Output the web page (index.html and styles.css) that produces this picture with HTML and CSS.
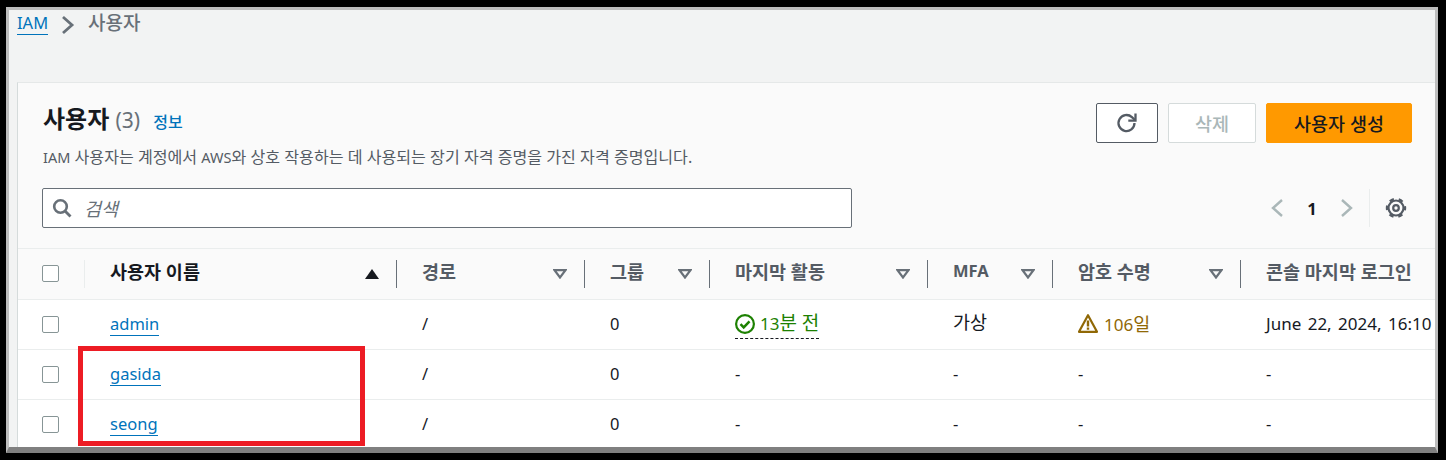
FILE: index.html
```html
<!DOCTYPE html>
<html lang="ko">
<head>
    <meta charset="UTF-8">
    <title>IAM 사용자</title>
    <link rel="stylesheet" href="styles.css">
</head>
<body>
    <div class="page">
        <div class="breadcrumb">
            <a class="crumb-link">IAM</a>
            <svg class="crumb-sep" width="14" height="20" viewBox="0 0 14 20"><path d="M2 2l9 8-9 8" fill="none" stroke="#687078" stroke-width="2.800"/></svg>
            <span class="crumb-current">사용자</span>
        </div>

        <div class="panel">
            <div class="panel-head">
                <div class="title-row">
                    <div class="title-block">
                        <h1>사용자 <span class="count">(3)</span> <a class="info">정보</a></h1>
                        <p class="desc"><span class="lat">IAM</span> 사용자는 계정에서 <span class="lat">AWS</span>와 상호 작용하는 데 사용되는 장기 자격 증명을 가진 자격 증명입니다.</p>
                    </div>
                    <div class="actions">
                        <button class="btn btn-icon">
                            <svg width="22" height="22" viewBox="0 0 22 22"><path d="M18.500 11a8 8 0 1 1-2.600-5.900L19 8" fill="none" stroke="#545b64" stroke-width="2.300"/><path d="M19.500 1.500V8.700h-7.200" fill="none" stroke="#545b64" stroke-width="2.300"/></svg>
                        </button>
                        <button class="btn btn-disabled">삭제</button>
                        <button class="btn btn-primary">사용자 생성</button>
                    </div>
                </div>
                <div class="filter-row">
                    <div class="search">
                        <svg width="20" height="20" viewBox="0 0 20 20"><circle cx="8.500" cy="8.500" r="6.300" fill="none" stroke="#687078" stroke-width="2.600"/><path d="M13 13l5.500 5.500" stroke="#687078" stroke-width="2.800"/></svg>
                        <span class="placeholder">검색</span>
                    </div>
                    <div class="pager">
                        <svg width="16" height="20" viewBox="0 0 16 20"><path d="M13 2L4 10l9 8" fill="none" stroke="#aab7b8" stroke-width="2.400"/></svg>
                        <span class="page-num">1</span>
                        <svg width="16" height="20" viewBox="0 0 16 20"><path d="M3 2l9 8-9 8" fill="none" stroke="#aab7b8" stroke-width="2.400"/></svg>
                        <span class="pager-sep"></span>
                        <svg class="gear" width="22" height="22" viewBox="0 0 22 22"><circle cx="11" cy="11" r="7.500" fill="none" stroke="#545b64" stroke-width="2.200"/><circle cx="11" cy="11" r="9" fill="none" stroke="#545b64" stroke-width="2.400" stroke-dasharray="4.500 4.925" stroke-dashoffset="2.250"/><circle cx="11" cy="11" r="2.800" fill="none" stroke="#545b64" stroke-width="2.200"/></svg>
                    </div>
                </div>
            </div>

            <table class="users">
                <colgroup>
                    <col class="c-check"><col class="c-name"><col class="c-path"><col class="c-group">
                    <col class="c-activity"><col class="c-mfa"><col class="c-pass"><col>
                </colgroup>
                <thead>
                    <tr>
                        <th><span class="cell-head first"><span class="checkbox"></span></span></th>
                        <th class="sorted"><span class="cell-head">사용자 이름 <svg class="sort" width="14" height="10" viewBox="0 0 14 10"><path d="M7 0l7 10H0z" fill="#16191f"/></svg></span></th>
                        <th><span class="cell-head">경로 <svg class="sort" width="14" height="10" viewBox="0 0 14 10"><path d="M1.500 1.200h11L7 8.500z" fill="none" stroke="#687078" stroke-width="2.200"/></svg></span></th>
                        <th><span class="cell-head">그룹 <svg class="sort" width="14" height="10" viewBox="0 0 14 10"><path d="M1.500 1.200h11L7 8.500z" fill="none" stroke="#687078" stroke-width="2.200"/></svg></span></th>
                        <th><span class="cell-head">마지막 활동 <svg class="sort" width="14" height="10" viewBox="0 0 14 10"><path d="M1.500 1.200h11L7 8.500z" fill="none" stroke="#687078" stroke-width="2.200"/></svg></span></th>
                        <th><span class="cell-head"><span class="lat-head">MFA</span> <svg class="sort" width="14" height="10" viewBox="0 0 14 10"><path d="M1.500 1.200h11L7 8.500z" fill="none" stroke="#687078" stroke-width="2.200"/></svg></span></th>
                        <th><span class="cell-head">암호 수명 <svg class="sort" width="14" height="10" viewBox="0 0 14 10"><path d="M1.500 1.200h11L7 8.500z" fill="none" stroke="#687078" stroke-width="2.200"/></svg></span></th>
                        <th><span class="cell-head last">콘솔 마지막 로그인</span></th>
                    </tr>
                </thead>
                <tbody>
                    <tr>
                        <td class="check"><span class="checkbox"></span></td>
                        <td><a class="user-link">admin</a></td>
                        <td>/</td>
                        <td>0</td>
                        <td class="cell-status">
                            <span class="status-ok">
                                <svg width="20" height="20" viewBox="0 0 20 20"><circle cx="10" cy="10" r="8.900" fill="none" stroke="#1d8102" stroke-width="2.200"/><path d="M5.500 10.200l3.200 3.200 5.800-6" fill="none" stroke="#1d8102" stroke-width="2.500"/></svg>
                                <span>13<span class="ko">분 전</span></span>
                            </span>
                        </td>
                        <td class="ko">가상</td>
                        <td class="cell-status">
                            <span class="status-warn">
                                <svg width="20" height="20" viewBox="0 0 20 20"><path d="M10 2.200L19 18.800H1z" fill="none" stroke="#906806" stroke-width="2.200" stroke-linejoin="round"/><path d="M10 7.500v6M10 14.500v2.300" stroke="#906806" stroke-width="2.400"/></svg>
                                <span>106<span class="ko">일</span></span>
                            </span>
                        </td>
                        <td class="date">June 22, 2024, 16:10</td>
                    </tr>
                    <tr>
                        <td class="check"><span class="checkbox"></span></td>
                        <td><a class="user-link">gasida</a></td>
                        <td>/</td><td>0</td><td>-</td><td>-</td><td>-</td><td>-</td>
                    </tr>
                    <tr>
                        <td class="check"><span class="checkbox"></span></td>
                        <td><a class="user-link">seong</a></td>
                        <td>/</td><td>0</td><td>-</td><td>-</td><td>-</td><td>-</td>
                    </tr>
                </tbody>
            </table>
        </div>

        <div class="highlight"></div>
    </div>
</body>
</html>
```

FILE: styles.css
```css
* {
    box-sizing: border-box;
}
body {
    margin: 0;
    padding: 7px 8px 0 6px;
    background: #000;
    font-family: "Noto Sans", "Noto Sans CJK KR", sans-serif;
    font-size: 16.5px;
    color: #16191f;
    overflow: hidden;
}
.page {
    position: relative;
    height: 446px;
    padding: 0 0 0 8px;
    background: #f2f3f3;
    border: 3px solid #bdbdbd;
    border-bottom-width: 6px;
    border-bottom-color: #808080;
    overflow: hidden;
}

/* breadcrumb */
.breadcrumb {
    display: flex;
    align-items: flex-start;
    height: 72px;
    padding-top: 2px;
}
.crumb-link {
    color: #0073bb;
    border-bottom: 1px solid #0073bb;
    line-height: 22px;
}
.crumb-sep {
    margin: 3px 13px 0 13px;
}
.crumb-current {
    color: #687078;
    font-size: 19px;
    font-weight: 500;
    line-height: 22px;
}

/* panel */
.panel {
    background: #fff;
    border-left: 1px solid #d5dbdb;
    border-top: 1px solid #e5e8e8;
    height: 371px;
}
.panel-head {
    background: #fafafa;
    padding: 0 23px 0 25px;
    height: 166px;
    border-bottom: 1px solid #eaeded;
}
.title-row {
    display: flex;
    justify-content: space-between;
    padding-top: 20px;
}
h1 {
    margin: 0;
    font-size: 24px;
    font-weight: 700;
    line-height: 32px;
}
.count {
    color: #687078;
    font-size: 21px;
    font-weight: 400;
}
.info {
    color: #0073bb;
    font-size: 16px;
    font-weight: 500;
    margin-left: 7px;
}
.desc {
    margin: 9px 0 0;
    font-size: 16.100px;
    line-height: 20px;
    color: #545b64;
}
.lat {
    font-size: 14.500px;
}
.actions {
    display: flex;
    gap: 10px;
}
.btn {
    height: 40px;
    border-radius: 2px;
    font-family: inherit;
    font-size: 18.500px;
    font-weight: 500;
    padding: 0;
}
.btn-icon {
    width: 62px;
    background: #fff;
    border: 1px solid #545b64;
    display: flex;
    align-items: center;
    justify-content: center;
}
.btn-disabled {
    width: 88px;
    background: #fff;
    border: 1px solid #d5dbdb;
    color: #aab7b8;
}
.btn-primary {
    width: 146px;
    background: #ff9900;
    border: 1px solid #ff9900;
    color: #16191f;
}
.filter-row {
    display: flex;
    justify-content: space-between;
    align-items: center;
    margin: 21px 0 0 -1px;
}
.search {
    width: 810px;
    height: 40px;
    background: #fff;
    border: 1px solid #687078;
    border-radius: 2px;
    display: flex;
    align-items: center;
    gap: 12px;
    padding-left: 9px;
}
.placeholder {
    color: #687078;
    font-size: 18.500px;
    font-style: italic;
}
.pager {
    display: flex;
    align-items: center;
    padding-right: 5px;
}
.page-num {
    width: 54px;
    text-align: center;
    font-weight: 700;
    font-size: 16.500px;
}
.pager-sep {
    width: 1px;
    height: 38px;
    background: #eaeded;
    margin: 0 15px 0 14px;
}

/* table */
.users {
    table-layout: fixed;
    border-collapse: collapse;
    width: 1418px;
}
.c-check { width: 67px; }
.c-name { width: 312px; }
.c-path { width: 188px; }
.c-group { width: 125px; }
.c-activity { width: 218px; }
.c-mfa { width: 125px; }
.c-pass { width: 188px; }
th {
    height: 50px;
    background: #fafafa;
    padding: 0;
    text-align: left;
    font-size: 18.500px;
    font-weight: 700;
    color: #545b64;
    border-bottom: 1px solid #eaeded;
}
th.sorted {
    color: #16191f;
}
.lat-head {
    font-size: 16.500px;
    font-weight: 700;
}
.cell-head {
    display: flex;
    align-items: center;
    justify-content: space-between;
    height: 28px;
    padding: 0 17px 6px 25px;
    border-right: 1px solid #687078;
    white-space: nowrap;
}
.cell-head.first {
    padding: 0 0 0 24px;
    border-right-color: #eaeded;
}
.cell-head.last {
    border-right: 0;
}
.sort {
    flex: none;
    margin-top: 6px;
}
td {
    height: 50px;
    padding: 0 0 2px 25px;
    border-bottom: 1px solid #eaeded;
    overflow: hidden;
    white-space: nowrap;
}
td.check {
    padding: 0 0 0 24px;
}
td.cell-status {
    padding-bottom: 0;
}
td.ko {
    padding-bottom: 6px;
}
.ko {
    font-size: 18.500px;
}
.status-ok .ko {
    font-size: 19px;
}
.date {
    font-size: 17px;
    word-spacing: 2px;
}
.checkbox {
    display: block;
    width: 17px;
    height: 17px;
    background: #fff;
    border: 1px solid #879596;
    border-radius: 2px;
}
.user-link {
    color: #0073bb;
    border-bottom: 1px solid #0073bb;
}
.status-ok {
    display: inline-flex;
    align-items: center;
    gap: 5px;
    font-size: 17px;
    color: #1d8102;
    border-bottom: 1px dashed #16191f;
    line-height: 28px;
}
.status-warn {
    display: inline-flex;
    align-items: center;
    gap: 6px;
    font-size: 17px;
    color: #906806;
}

/* red annotation box drawn over the table */
.highlight {
    position: absolute;
    left: 69px;
    top: 336px;
    width: 287px;
    height: 100px;
    border: 5px solid #ed1c24;
}
```
